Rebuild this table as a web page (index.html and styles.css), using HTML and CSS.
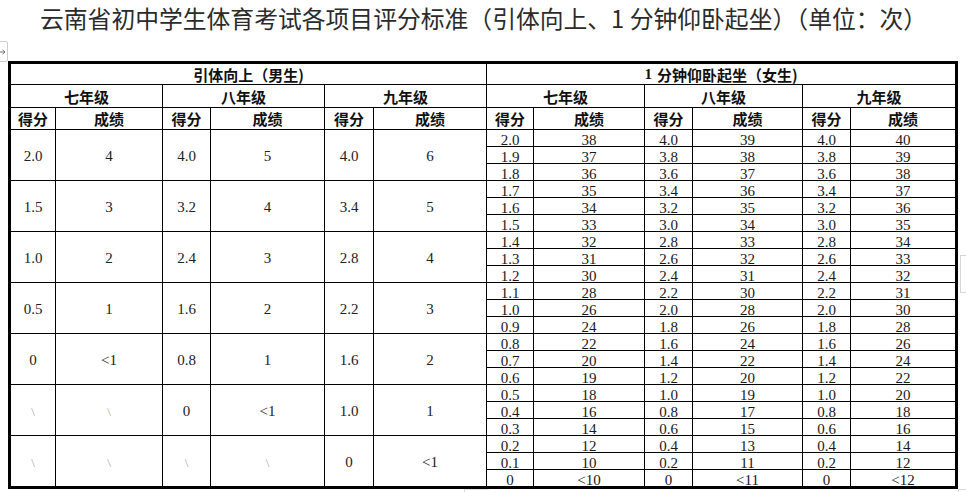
FILE: index.html
```html
<!DOCTYPE html>
<html lang="zh-CN">
<head>
<meta charset="utf-8">
<title>云南省初中学生体育考试各项目评分标准</title>
<link rel="stylesheet" href="styles.css">
</head>
<body>
<h1 class="title">云南省初中学生体育考试各项目评分标准（引体向上、1 分钟仰卧起坐）（单位：次）</h1>
<div class="handle"><svg width="8" height="6" viewBox="0 0 8 6"><path d="M0 3H7M4.5 0.8L7 3L4.5 5.2" fill="none" stroke="#666" stroke-width="0.9"/></svg></div>
<div class="side"></div>
<div class="foot-mark"></div>
<div class="foot-mark2"></div>

<div class="sheet">
  <div class="h h-sec">引体向上（男生)</div>
  <div class="h h-sec"><span class="num">1</span>分钟仰卧起坐（女生)</div>

  <div class="h h-grade">七年级</div>
  <div class="h h-grade">八年级</div>
  <div class="h h-grade">九年级</div>
  <div class="h h-grade">七年级</div>
  <div class="h h-grade">八年级</div>
  <div class="h h-grade">九年级</div>

  <div class="h">得分</div><div class="h">成绩</div>
  <div class="h">得分</div><div class="h">成绩</div>
  <div class="h">得分</div><div class="h">成绩</div>
  <div class="h">得分</div><div class="h">成绩</div>
  <div class="h">得分</div><div class="h">成绩</div>
  <div class="h">得分</div><div class="h">成绩</div>

  <!-- block 1 -->
  <div class="l">2.0</div><div class="l">4</div><div class="l">4.0</div><div class="l">5</div><div class="l">4.0</div><div class="l">6</div>
  <div class="r">2.0</div><div class="r">38</div><div class="r">4.0</div><div class="r">39</div><div class="r">4.0</div><div class="r">40</div>
  <div class="r">1.9</div><div class="r">37</div><div class="r">3.8</div><div class="r">38</div><div class="r">3.8</div><div class="r">39</div>
  <div class="r">1.8</div><div class="r">36</div><div class="r">3.6</div><div class="r">37</div><div class="r">3.6</div><div class="r">38</div>
  <!-- block 2 -->
  <div class="l">1.5</div><div class="l">3</div><div class="l">3.2</div><div class="l">4</div><div class="l">3.4</div><div class="l">5</div>
  <div class="r">1.7</div><div class="r">35</div><div class="r">3.4</div><div class="r">36</div><div class="r">3.4</div><div class="r">37</div>
  <div class="r">1.6</div><div class="r">34</div><div class="r">3.2</div><div class="r">35</div><div class="r">3.2</div><div class="r">36</div>
  <div class="r">1.5</div><div class="r">33</div><div class="r">3.0</div><div class="r">34</div><div class="r">3.0</div><div class="r">35</div>
  <!-- block 3 -->
  <div class="l">1.0</div><div class="l">2</div><div class="l">2.4</div><div class="l">3</div><div class="l">2.8</div><div class="l">4</div>
  <div class="r">1.4</div><div class="r">32</div><div class="r">2.8</div><div class="r">33</div><div class="r">2.8</div><div class="r">34</div>
  <div class="r">1.3</div><div class="r">31</div><div class="r">2.6</div><div class="r">32</div><div class="r">2.6</div><div class="r">33</div>
  <div class="r">1.2</div><div class="r">30</div><div class="r">2.4</div><div class="r">31</div><div class="r">2.4</div><div class="r">32</div>
  <!-- block 4 -->
  <div class="l">0.5</div><div class="l">1</div><div class="l">1.6</div><div class="l">2</div><div class="l">2.2</div><div class="l">3</div>
  <div class="r">1.1</div><div class="r">28</div><div class="r">2.2</div><div class="r">30</div><div class="r">2.2</div><div class="r">31</div>
  <div class="r">1.0</div><div class="r">26</div><div class="r">2.0</div><div class="r">28</div><div class="r">2.0</div><div class="r">30</div>
  <div class="r">0.9</div><div class="r">24</div><div class="r">1.8</div><div class="r">26</div><div class="r">1.8</div><div class="r">28</div>
  <!-- block 5 -->
  <div class="l">0</div><div class="l">&lt;1</div><div class="l">0.8</div><div class="l">1</div><div class="l">1.6</div><div class="l">2</div>
  <div class="r">0.8</div><div class="r">22</div><div class="r">1.6</div><div class="r">24</div><div class="r">1.6</div><div class="r">26</div>
  <div class="r">0.7</div><div class="r">20</div><div class="r">1.4</div><div class="r">22</div><div class="r">1.4</div><div class="r">24</div>
  <div class="r">0.6</div><div class="r">19</div><div class="r">1.2</div><div class="r">20</div><div class="r">1.2</div><div class="r">22</div>
  <!-- block 6 -->
  <div class="l na">\</div><div class="l na">\</div><div class="l">0</div><div class="l">&lt;1</div><div class="l">1.0</div><div class="l">1</div>
  <div class="r">0.5</div><div class="r">18</div><div class="r">1.0</div><div class="r">19</div><div class="r">1.0</div><div class="r">20</div>
  <div class="r">0.4</div><div class="r">16</div><div class="r">0.8</div><div class="r">17</div><div class="r">0.8</div><div class="r">18</div>
  <div class="r">0.3</div><div class="r">14</div><div class="r">0.6</div><div class="r">15</div><div class="r">0.6</div><div class="r">16</div>
  <!-- block 7 -->
  <div class="l na">\</div><div class="l na">\</div><div class="l na">\</div><div class="l na">\</div><div class="l">0</div><div class="l">&lt;1</div>
  <div class="r">0.2</div><div class="r">12</div><div class="r">0.4</div><div class="r">13</div><div class="r">0.4</div><div class="r">14</div>
  <div class="r">0.1</div><div class="r">10</div><div class="r">0.2</div><div class="r">11</div><div class="r">0.2</div><div class="r">12</div>
  <div class="r">0</div><div class="r">&lt;10</div><div class="r">0</div><div class="r">&lt;11</div><div class="r">0</div><div class="r">&lt;12</div>
</div>
</body>
</html>
```

FILE: styles.css
```css
html, body {
  margin: 0;
  padding: 0;
  background: #fff;
}

body {
  position: relative;
  width: 966px;
  height: 492px;
  overflow: hidden;
}

.title {
  margin: 0;
  padding-left: 40px;
  font-family: "Noto Sans CJK SC", "Noto Sans", sans-serif;
  font-weight: 400;
  font-size: 23.8px;
  line-height: 35px;
  color: #2b2b2b;
  white-space: nowrap;
}

.sheet {
  display: grid;
  grid-template-columns: 44px 106px 47px 113px 48px 112px 46px 110px 47px 109px 47px 104px;
  grid-template-rows: 20px 22px 21px repeat(21, 16px);
  gap: 1px;
  width: max-content;
  margin: 26px 0 0 8px;
  border: 3px solid #000;
  background: #000;
}

.sheet > div {
  background: #fff;
  display: flex;
  align-items: center;
  justify-content: center;
  white-space: nowrap;
}

.h {
  font-family: "Noto Sans CJK SC", sans-serif;
  font-weight: 700;
  font-size: 15px;
  line-height: 1;
  color: #111;
}

.h-sec {
  grid-column: span 6;
}

.h-grade {
  grid-column: span 2;
}

.num {
  font-family: "Liberation Serif", serif;
  font-weight: 700;
  margin-right: 5px;
}

.l {
  grid-row: span 3;
  font-family: "Liberation Serif", serif;
  font-size: 15px;
  line-height: 1;
  color: #222;
  padding-top: 3px;
}

.l.na {
  color: #a8a8a8;
  font-size: 13px;
}

.sheet > .r {
  align-items: flex-end;
  font-family: "Liberation Serif", serif;
  font-size: 15px;
  line-height: 11px;
  color: #1a1a1a;
  overflow: visible;
}

.handle {
  position: absolute;
  left: -9px;
  top: 41px;
  width: 15px;
  height: 19px;
  border: 1px solid #cfcfcf;
  border-radius: 2px;
  background: #fff;
  display: flex;
  align-items: center;
  justify-content: flex-end;
}

.handle svg {
  display: block;
  margin-right: 1px;
}

.side {
  position: absolute;
  left: 960px;
  top: 255px;
  width: 12px;
  height: 36px;
  border: 1px solid #d6d6d6;
  background: #fff;
}

.foot-mark {
  position: absolute;
  left: 464px;
  top: 489px;
  width: 24px;
  height: 6px;
  border-left: 1px solid #d6d6d6;
  border-top: 1px solid #e6e6e6;
}

.foot-mark2 {
  position: absolute;
  left: 958px;
  top: 489px;
  width: 10px;
  height: 6px;
  border: 1px solid #d6d6d6;
}
```
